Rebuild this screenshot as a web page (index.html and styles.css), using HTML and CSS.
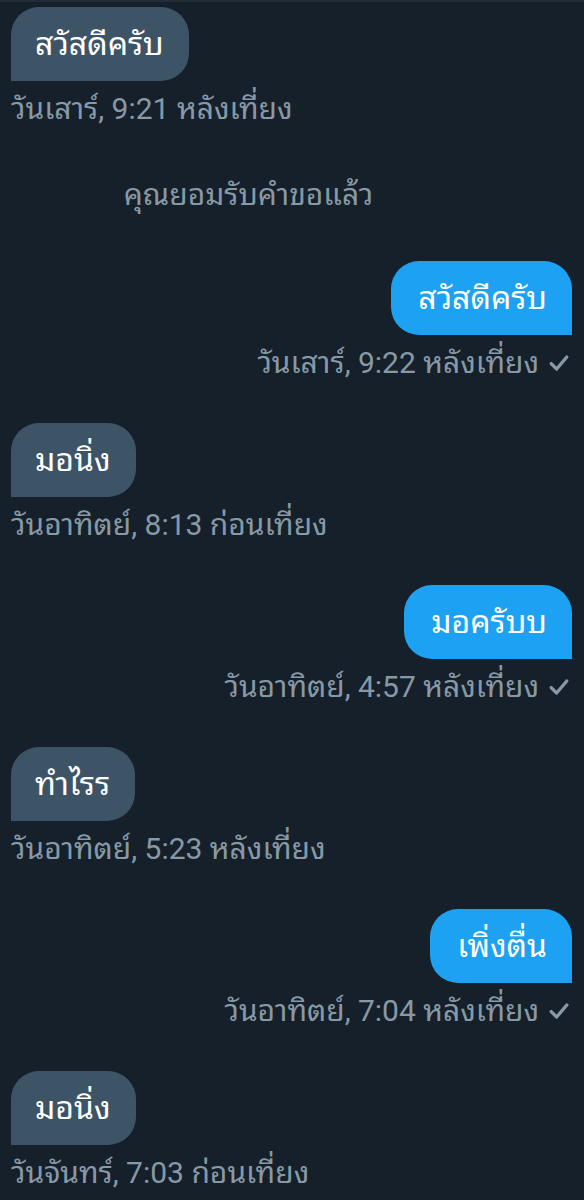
FILE: index.html
```html
<!DOCTYPE html>
<html lang="th">
<head>
<meta charset="utf-8">
<link rel="stylesheet" href="styles.css">
</head>
<body>
<div class="chat">
  <div class="msg in">
    <div class="bubble">สวัสดีครับ</div>
    <div class="time">วันเสาร์, 9:21 หลังเที่ยง</div>
  </div>
  <div class="system">คุณยอมรับคำขอแล้ว</div>
  <div class="msg out">
    <div class="bubble">สวัสดีครับ</div>
    <div class="time">วันเสาร์, 9:22 หลังเที่ยง <svg class="check" viewBox="0 0 20 20"><path d="M3.5 10.5 L8 15 L16.5 5"/></svg></div>
  </div>
  <div class="msg in">
    <div class="bubble">มอนิ่ง</div>
    <div class="time">วันอาทิตย์, 8:13 ก่อนเที่ยง</div>
  </div>
  <div class="msg out">
    <div class="bubble">มอครับบ</div>
    <div class="time">วันอาทิตย์, 4:57 หลังเที่ยง <svg class="check" viewBox="0 0 20 20"><path d="M3.5 10.5 L8 15 L16.5 5"/></svg></div>
  </div>
  <div class="msg in">
    <div class="bubble">ทำไรร</div>
    <div class="time">วันอาทิตย์, 5:23 หลังเที่ยง</div>
  </div>
  <div class="msg out">
    <div class="bubble">เพิ่งตื่น</div>
    <div class="time">วันอาทิตย์, 7:04 หลังเที่ยง <svg class="check" viewBox="0 0 20 20"><path d="M3.5 10.5 L8 15 L16.5 5"/></svg></div>
  </div>
  <div class="msg in">
    <div class="bubble">มอนิ่ง</div>
    <div class="time">วันจันทร์, 7:03 ก่อนเที่ยง</div>
  </div>
</div>
</body>
</html>
```
FILE: styles.css
```css
html, body {
  margin: 0;
  padding: 0;
  background: #15202b;
}
body {
  border-top: 2px solid #202c38;
  height: 1198px;
  overflow: hidden;
  font-family: "Roboto", "Noto Sans Thai Looped", "Loma", "Garuda", "Noto Sans", sans-serif;
}
.chat {
  display: flex;
  flex-direction: column;
  padding: 5px 12px 0 11px;
}
.msg {
  display: flex;
  flex-direction: column;
  margin-bottom: 44px;
}
.msg.in { align-items: flex-start; }
.msg.out { align-items: flex-end; }
.bubble {
  height: 74px;
  line-height: 74px;
  padding: 0 25px 0 24px;
  font-size: 32px;
  font-weight: 400;
  color: #ffffff;
  border-radius: 28px;
  box-sizing: border-box;
  overflow: hidden;
}
.in .bubble {
  background: #3d5466;
  border-bottom-left-radius: 0;
}
.out .bubble {
  background: #1da1f2;
  border-bottom-right-radius: 0;
  padding-left: 27px;
}
.time {
  margin-top: 12px;
  height: 32px;
  line-height: 32px;
  font-size: 30px;
  color: #8899a6;
  white-space: nowrap;
  display: flex;
  align-items: center;
  gap: 8px;
}
.out .time { margin-right: 1px; }
.check {
  width: 24px;
  height: 24px;
  fill: none;
  stroke: #8899a6;
  stroke-width: 2.8;
  stroke-linecap: round;
  stroke-linejoin: round;
}
.system {
  margin-top: 10px;
  margin-bottom: 50px;
  height: 32px;
  padding-right: 86px;
  text-align: center;
  line-height: 32px;
  font-size: 30px;
  color: #8899a6;
}
```
